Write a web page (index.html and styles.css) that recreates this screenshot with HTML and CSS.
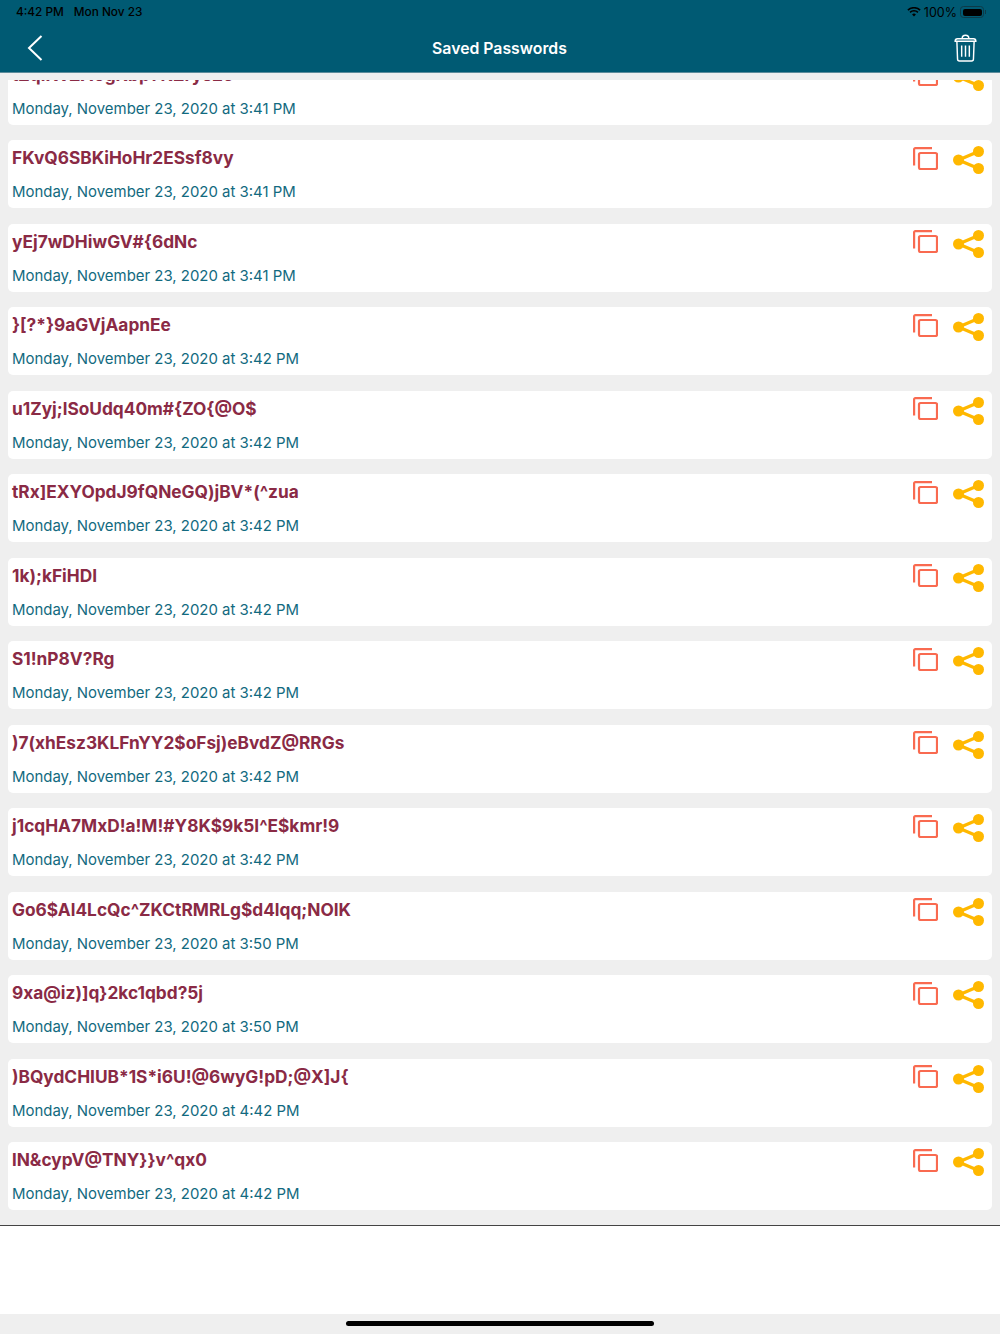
FILE: index.html
```html
<!DOCTYPE html>
<html lang="en">
<head>
<meta charset="utf-8"/>
<meta content="width=device-width, initial-scale=1.0" name="viewport"/>
<title>Saved Passwords</title>
<link rel="stylesheet" href="styles.css">
</head>
<body>
<svg class="defs" width="0" height="0">
  <symbol id="copy" viewBox="0 0 25 23">
    <path d="M19 1.100H2.300A1.200 1.200 0 0 0 1.100 2.300V18.500" fill="none" stroke="currentColor" stroke-width="2.200"/>
    <rect x="6" y="6" width="18" height="16" rx="1.500" fill="none" stroke="currentColor" stroke-width="2.200"/>
  </symbol>
  <symbol id="share" viewBox="0 0 32 28">
    <path d="M5.500 14 25.500 5.500M5.500 14l20 8.500" fill="none" stroke="currentColor" stroke-width="3.200"/>
    <circle cx="5.500" cy="14" r="5.500" fill="currentColor"/>
    <circle cx="25.500" cy="5.500" r="5.500" fill="currentColor"/>
    <circle cx="25.500" cy="22.500" r="5.500" fill="currentColor"/>
  </symbol>
</svg>

<header class="topbar">
  <div class="statusbar">
    <span class="clock">4:42 PM</span>
    <span>Mon Nov 23</span>
    <span class="status-right">
      <svg class="wifi" viewBox="0 0 16 12" width="14" height="10">
        <path d="M8 11.500 5.700 9a3.300 3.300 0 0 1 4.600 0ZM3.900 7.200 2.600 5.800a7.800 7.800 0 0 1 10.800 0l-1.300 1.400a5.900 5.900 0 0 0-8.200 0ZM1.300 4.500 0 3.100a11.600 11.600 0 0 1 16 0l-1.300 1.400a9.700 9.700 0 0 0-13.400 0Z" fill="#000"/>
      </svg>
      <span class="pct">100%</span>
      <span class="battery"><span class="battery-fill"></span></span>
      <span class="battery-nub"></span>
    </span>
  </div>
  <div class="navbar">
    <svg class="back" viewBox="0 0 16 26" width="16" height="26">
      <path d="M14.500 1 2 13l12.500 12" fill="none" stroke="#fff" stroke-width="2"/>
    </svg>
    <h1>Saved Passwords</h1>
    <svg class="trash" viewBox="0 0 24 29" width="23" height="28">
      <path d="M1.200 7.500c0-2 1-2.700 2.500-2.700h16.600c1.500 0 2.500.7 2.500 2.700ZM8.500 4.800c0-2.500 1-3.600 3.500-3.600s3.500 1.100 3.500 3.600M3 7.500l.7 18.500c0 1.200.8 2 2 2h12.600c1.200 0 2-.8 2-2L21 7.500" fill="none" stroke="#fff" stroke-width="1.500"/>
      <path d="M8 12v11.500M12 12v11.500M16 12v11.500" fill="none" stroke="#fff" stroke-width="1.500"/>
    </svg>
  </div>
</header>

<main class="content">
  <div class="list" id="list">
    <article class="card first">
      <div class="card-text"><div class="pw">tZqiNvZA6gKbpYKZrye2c</div><div class="date">Monday, November 23, 2020 at 3:41 PM</div></div>
      <div class="actions"><svg class="ic-copy"><use href="#copy"/></svg><svg class="ic-share"><use href="#share"/></svg></div>
    </article>
    <article class="card">
      <div class="card-text"><div class="pw">FKvQ6SBKiHoHr2ESsf8vy</div><div class="date">Monday, November 23, 2020 at 3:41 PM</div></div>
      <div class="actions"><svg class="ic-copy"><use href="#copy"/></svg><svg class="ic-share"><use href="#share"/></svg></div>
    </article>
    <article class="card">
      <div class="card-text"><div class="pw">yEj7wDHiwGV#{6dNc</div><div class="date">Monday, November 23, 2020 at 3:41 PM</div></div>
      <div class="actions"><svg class="ic-copy"><use href="#copy"/></svg><svg class="ic-share"><use href="#share"/></svg></div>
    </article>
    <article class="card">
      <div class="card-text"><div class="pw">}[?*}9aGVjAapnEe</div><div class="date">Monday, November 23, 2020 at 3:42 PM</div></div>
      <div class="actions"><svg class="ic-copy"><use href="#copy"/></svg><svg class="ic-share"><use href="#share"/></svg></div>
    </article>
    <article class="card">
      <div class="card-text"><div class="pw">u1Zyj;lSoUdq40m#{ZO{@O$</div><div class="date">Monday, November 23, 2020 at 3:42 PM</div></div>
      <div class="actions"><svg class="ic-copy"><use href="#copy"/></svg><svg class="ic-share"><use href="#share"/></svg></div>
    </article>
    <article class="card">
      <div class="card-text"><div class="pw">tRx]EXYOpdJ9fQNeGQ)jBV*(^zua</div><div class="date">Monday, November 23, 2020 at 3:42 PM</div></div>
      <div class="actions"><svg class="ic-copy"><use href="#copy"/></svg><svg class="ic-share"><use href="#share"/></svg></div>
    </article>
    <article class="card">
      <div class="card-text"><div class="pw">1k);kFiHDI</div><div class="date">Monday, November 23, 2020 at 3:42 PM</div></div>
      <div class="actions"><svg class="ic-copy"><use href="#copy"/></svg><svg class="ic-share"><use href="#share"/></svg></div>
    </article>
    <article class="card">
      <div class="card-text"><div class="pw">S1!nP8V?Rg</div><div class="date">Monday, November 23, 2020 at 3:42 PM</div></div>
      <div class="actions"><svg class="ic-copy"><use href="#copy"/></svg><svg class="ic-share"><use href="#share"/></svg></div>
    </article>
    <article class="card">
      <div class="card-text"><div class="pw">)7(xhEsz3KLFnYY2$oFsj)eBvdZ@RRGs</div><div class="date">Monday, November 23, 2020 at 3:42 PM</div></div>
      <div class="actions"><svg class="ic-copy"><use href="#copy"/></svg><svg class="ic-share"><use href="#share"/></svg></div>
    </article>
    <article class="card">
      <div class="card-text"><div class="pw">j1cqHA7MxD!a!M!#Y8K$9k5I^E$kmr!9</div><div class="date">Monday, November 23, 2020 at 3:42 PM</div></div>
      <div class="actions"><svg class="ic-copy"><use href="#copy"/></svg><svg class="ic-share"><use href="#share"/></svg></div>
    </article>
    <article class="card">
      <div class="card-text"><div class="pw">Go6$Al4LcQc^ZKCtRMRLg$d4lqq;NOIK</div><div class="date">Monday, November 23, 2020 at 3:50 PM</div></div>
      <div class="actions"><svg class="ic-copy"><use href="#copy"/></svg><svg class="ic-share"><use href="#share"/></svg></div>
    </article>
    <article class="card">
      <div class="card-text"><div class="pw">9xa@iz)]q}2kc1qbd?5j</div><div class="date">Monday, November 23, 2020 at 3:50 PM</div></div>
      <div class="actions"><svg class="ic-copy"><use href="#copy"/></svg><svg class="ic-share"><use href="#share"/></svg></div>
    </article>
    <article class="card">
      <div class="card-text"><div class="pw">)BQydCHIUB*1S*i6U!@6wyG!pD;@X]J{</div><div class="date">Monday, November 23, 2020 at 4:42 PM</div></div>
      <div class="actions"><svg class="ic-copy"><use href="#copy"/></svg><svg class="ic-share"><use href="#share"/></svg></div>
    </article>
    <article class="card">
      <div class="card-text"><div class="pw">lN&amp;cypV@TNY}}v^qx0</div><div class="date">Monday, November 23, 2020 at 4:42 PM</div></div>
      <div class="actions"><svg class="ic-copy"><use href="#copy"/></svg><svg class="ic-share"><use href="#share"/></svg></div>
    </article>
  </div>
</main>

<div class="footer-space"></div>
<div class="home-area"><span class="home-bar"></span></div>
</body>
</html>
```

FILE: styles.css
```css
* { box-sizing: border-box; }
html, body { margin: 0; padding: 0; }
body { width: 1000px; height: 1334px; overflow: hidden; display: flex; flex-direction: column; background: #fff; font-family: Inter, "Liberation Sans", sans-serif; }
.defs { position: absolute; }

.topbar { height: 73px; flex: none; background: #005a73; border-bottom: 1px solid #5d8c9b; }
.statusbar { height: 24px; padding: 0 14px 0 16px; display: flex; align-items: center; gap: 10px; font-size: 11.800px; font-weight: 500; color: #000; }
.status-right { margin-left: auto; display: flex; align-items: center; gap: 3px; }
.pct { font-weight: 400; font-size: 12.500px; }
.battery { width: 24px; height: 12px; padding: 1.500px; border: 1px solid #0d3a48; border-radius: 3.500px; display: block; }
.battery-fill { display: block; width: 100%; height: 100%; background: #000; border-radius: 2px; }
.battery-nub { width: 1px; height: 4px; margin-left: -2px; background: #0d3a48; }

.navbar { height: 48px; display: flex; align-items: center; justify-content: space-between; padding: 0 23px 0 27px; }
.navbar h1 { margin: 0 0 0 2px; font-size: 15.800px; font-weight: 600; color: #fff; }
.back { flex: none; margin-bottom: 1px; }
.trash { flex: none; margin-bottom: 1px; }

.content { flex: none; height: 1153px; background: #efefef; padding-top: 7px; border-bottom: 1px solid #444; }
.list { height: 1145px; overflow: hidden; display: flex; flex-direction: column; gap: 15.500px; padding: 0 8px; }

.card { flex: none; height: 68px; background: #fff; border-radius: 5px; padding: 7px 4px 0; display: flex; justify-content: space-between; }
.card.first { margin-top: -23.500px; }
.pw { font-size: 17.300px; font-weight: 700; line-height: 22px; color: #8a2a45; white-space: nowrap; }
.date { margin-top: 13px; font-size: 14.950px; line-height: 20px; color: #126a80; white-space: nowrap; }

.actions { display: flex; gap: 15px; padding-right: 3px; margin-top: -0.500px; }
.ic-copy { width: 25px; height: 23px; color: #f96a50; }
.ic-share { width: 32px; height: 28px; margin-top: -0.500px; color: #ffb800; }

.footer-space { flex: none; height: 88px; background: #fff; }
.home-area { flex: none; height: 20px; background: #efefef; padding-top: 7px; display: flex; justify-content: center; }
.home-bar { width: 308px; height: 5px; border-radius: 3px; background: #000; }
```
